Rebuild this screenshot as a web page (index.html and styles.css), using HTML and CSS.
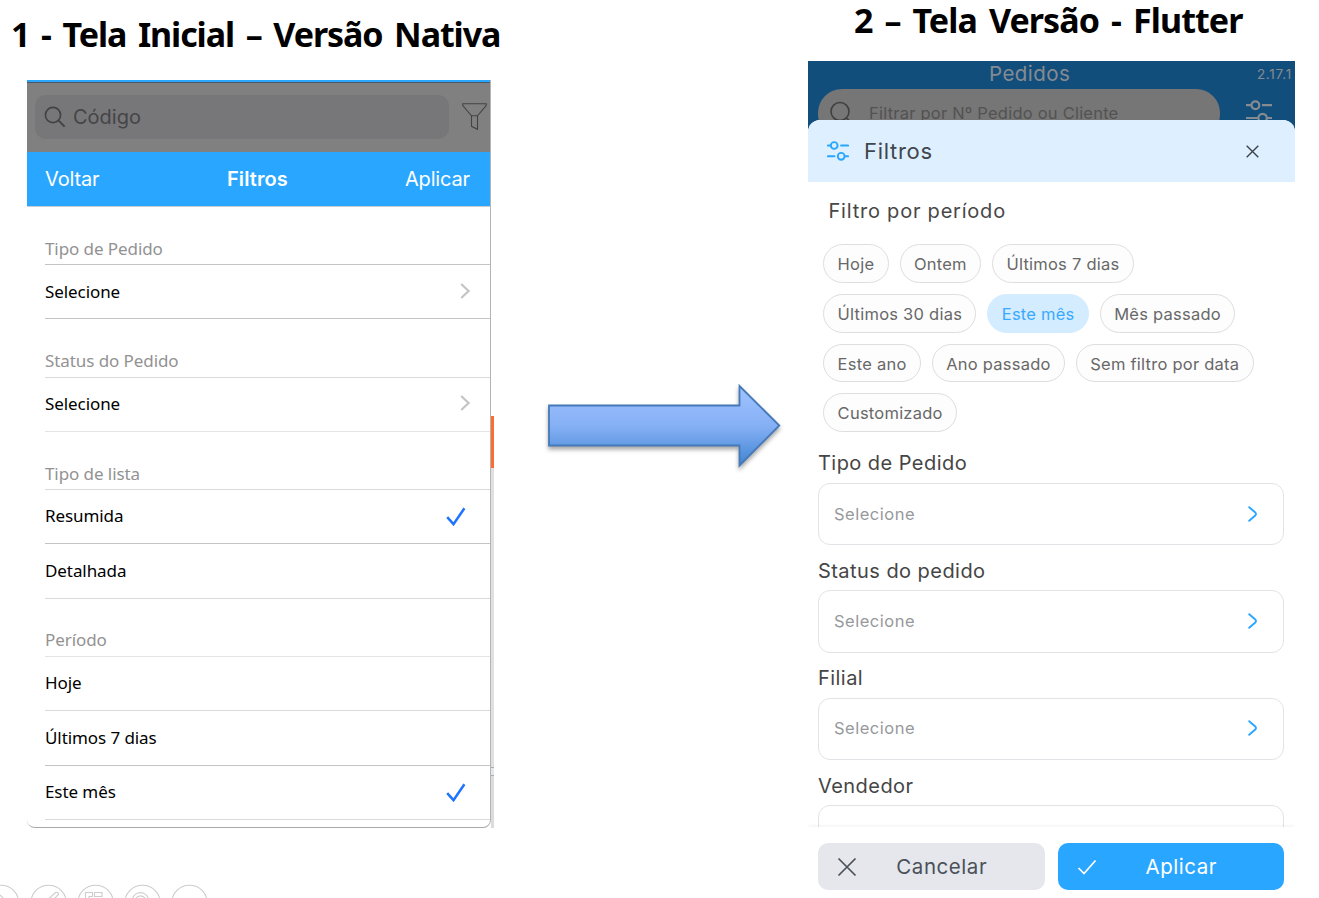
FILE: index.html
```html
<!DOCTYPE html>
<html lang="pt-BR">
<head>
    <meta charset="UTF-8">
    <meta name="viewport" content="width=device-width, initial-scale=1.0">
    <title>Filtros - Nativa x Flutter</title>
    <link rel="stylesheet" href="styles.css">
</head>
<body>
    <div class="slide">
        <!-- Versão nativa -->
        <section class="native">
            <h1 class="title title-native">1 - Tela Inicial – Versão Nativa</h1>
            <div class="native-shot">
                <div class="native-screen">
                    <div class="native-search">
                        <div class="search-box">
                            <svg width="22" height="22" viewBox="0 0 22 22" fill="none" stroke="#434345" stroke-width="1.7">
                                <circle cx="9" cy="9" r="7.6"/>
                                <path d="M14.4 14.4L20.6 20.6" stroke-width="2"/>
                            </svg>
                            <span>Código</span>
                        </div>
                        <svg class="funnel" width="25" height="28" viewBox="0 0 25 28" fill="none" stroke="#434343" stroke-width="1.1">
                            <path d="M.8 .8H24.2V2.5L15.5 12.8H9.5L.8 2.5ZM9.5 12.8V23.3L15.5 26.3V12.8"/>
                        </svg>
                    </div>
                    <div class="native-nav">
                        <span>Voltar</span>
                        <strong>Filtros</strong>
                        <span class="aplicar">Aplicar</span>
                    </div>
                    <div class="native-list">
                        <div class="group">Tipo de Pedido</div>
                        <div class="row">
                            <span>Selecione</span>
                            <svg class="chevron" width="11" height="16" viewBox="0 0 11 16"><path d="M1.2 1L8.6 8L1.2 15"/></svg>
                        </div>
                        <div class="group light">Status do Pedido</div>
                        <div class="row lighter">
                            <span>Selecione</span>
                            <svg class="chevron" width="11" height="16" viewBox="0 0 11 16"><path d="M1.2 1L8.6 8L1.2 15"/></svg>
                        </div>
                        <div class="group light">Tipo de lista</div>
                        <div class="row">
                            <span>Resumida</span>
                            <svg class="check" width="20" height="20" viewBox="0 0 20 20"><path d="M1.2 11.2L7.5 18.2L18.4 2.2"/></svg>
                        </div>
                        <div class="row light">Detalhada</div>
                        <div class="group lighter">Período</div>
                        <div class="row light">Hoje</div>
                        <div class="row tall">Últimos 7 dias</div>
                        <div class="row light">
                            <span>Este mês</span>
                            <svg class="check" width="20" height="20" viewBox="0 0 20 20"><path d="M1.2 11.2L7.5 18.2L18.4 2.2"/></svg>
                        </div>
                    </div>
                </div>
                <div class="edge">
                    <div class="edge-orange"></div>
                    <div class="edge-gray"></div>
                    <div class="edge-mark"></div>
                </div>
            </div>
            <svg class="slide-tools" width="220" height="14" viewBox="0 884 220 14" fill="none" stroke="#cdcdcd" stroke-width="1.1">
                <circle cx="1" cy="903" r="17.8"/>
                <circle cx="48.6" cy="903" r="17.8"/>
                <circle cx="95.6" cy="903" r="17.8"/>
                <circle cx="142.5" cy="903" r="17.8"/>
                <circle cx="189.5" cy="903" r="17.8"/>
                <path d="M0 895L4 899M48.5 899L55.5 892.6Q58.5 891.5 58.5 894.5L54 899"/>
                <path d="M85.5 899V892.5H92.5V896.5H89V899M94.5 892.5H102V896.5H94.5Z"/>
                <path d="M132.5 899A8.2 8.2 0 0 1 148.5 899M135.5 899A5.6 5.6 0 0 1 145.5 899"/>
            </svg>
        </section>

        <svg class="arrow" width="246" height="96" viewBox="0 0 246 96">
            <defs>
                <linearGradient id="arrowFill" x1="0" y1="0" x2="0" y2="1">
                    <stop offset="0" stop-color="#9fc3ff"/>
                    <stop offset="0.5" stop-color="#86b0f5"/>
                    <stop offset="1" stop-color="#4085d2"/>
                </linearGradient>
            </defs>
            <path d="M7 26.5H197.5V7L237.3 46.5L197.5 86.5V66.5H7Z" fill="url(#arrowFill)" stroke="#4579b8" stroke-width="1.8"/>
        </svg>

        <!-- Versão Flutter -->
        <section class="flutter">
            <h1 class="title title-flutter">2 – Tela Versão - Flutter</h1>
            <div class="flutter-screen">
                <div class="app-bar">
                    <div class="app-top">
                        <span class="app-name">Pedidos</span>
                        <span class="app-version">2.17.1</span>
                    </div>
                    <div class="app-search">
                        <div class="app-pill">
                            <svg width="24" height="24" viewBox="0 0 24 24" fill="none" stroke="#404040" stroke-width="1.6">
                                <circle cx="10" cy="10.5" r="9"/>
                                <path d="M16.5 17L21.5 22"/>
                            </svg>
                            <span>Filtrar por Nº Pedido ou Cliente</span>
                        </div>
                        <svg class="sliders" width="26" height="26" viewBox="0 0 26 26" fill="none" stroke="#858b91" stroke-width="2.2">
                            <path d="M0 6.2H5.5M16 6.2H26M0 19H12M21 19H26"/>
                            <circle cx="9.4" cy="6.2" r="3.9"/>
                            <circle cx="16.6" cy="19" r="4.2"/>
                        </svg>
                    </div>
                </div>
                <div class="sheet">
                    <div class="sheet-header">
                        <svg width="22" height="20" viewBox="0 0 22 20" fill="none" stroke="#29a6ff" stroke-width="1.9" stroke-linecap="round">
                            <path d="M.9 4.5H3.5M14 4.5H21.1M.9 15.3H7.5M18 15.3H21.1"/>
                            <circle cx="7.2" cy="4.5" r="3.4"/>
                            <circle cx="14.2" cy="15.3" r="3.4"/>
                        </svg>
                        <h2>Filtros</h2>
                        <svg class="close" width="13" height="13" viewBox="0 0 13 13" fill="none" stroke="#3c4249" stroke-width="1.4">
                            <path d="M.7.7L12.3 12.3M12.3.7L.7 12.3"/>
                        </svg>
                    </div>
                    <div class="sheet-body">
                        <h3 class="period-title">Filtro por período</h3>
                        <div class="chips">
                            <span class="chip">Hoje</span>
                            <span class="chip">Ontem</span>
                            <span class="chip">Últimos 7 dias</span>
                            <span class="chip">Últimos 30 dias</span>
                            <span class="chip active">Este mês</span>
                            <span class="chip">Mês passado</span>
                            <span class="chip">Este ano</span>
                            <span class="chip">Ano passado</span>
                            <span class="chip">Sem filtro por data</span>
                            <span class="chip">Customizado</span>
                        </div>
                        <div class="field">
                            <label>Tipo de Pedido</label>
                            <div class="select">
                                <span>Selecione</span>
                                <svg width="10" height="16" viewBox="0 0 10 16"><path d="M1.2 1.2L7 6.2Q9 8 7 9.8L1.2 14.8"/></svg>
                            </div>
                        </div>
                        <div class="field">
                            <label>Status do pedido</label>
                            <div class="select">
                                <span>Selecione</span>
                                <svg width="10" height="16" viewBox="0 0 10 16"><path d="M1.2 1.2L7 6.2Q9 8 7 9.8L1.2 14.8"/></svg>
                            </div>
                        </div>
                        <div class="field">
                            <label>Filial</label>
                            <div class="select">
                                <span>Selecione</span>
                                <svg width="10" height="16" viewBox="0 0 10 16"><path d="M1.2 1.2L7 6.2Q9 8 7 9.8L1.2 14.8"/></svg>
                            </div>
                        </div>
                        <div class="field">
                            <label>Vendedor</label>
                            <div class="select"></div>
                        </div>
                    </div>
                    <div class="sheet-footer">
                        <div class="btn btn-cancel">
                            <svg width="20" height="20" viewBox="0 0 20 20"><path d="M1.5 1.5L18.5 18.5M18.5 1.5L1.5 18.5"/></svg>
                            <span>Cancelar</span>
                        </div>
                        <div class="btn btn-apply">
                            <svg width="20" height="20" viewBox="0 0 20 20"><path d="M1.5 11L7 16.5L18.5 3.5"/></svg>
                            <span>Aplicar</span>
                        </div>
                    </div>
                </div>
            </div>
        </section>
    </div>
</body>
</html>
```
FILE: styles.css
```css
* {
    box-sizing: border-box;
}

body {
    margin: 0;
    background-color: #fff;
    font-family: Inter, "Liberation Sans", sans-serif;
    overflow: hidden;
}

svg {
    display: block;
    flex: none;
}

h1, h2, h3 {
    margin: 0;
    font-weight: 400;
}

.slide {
    display: flex;
    width: 1319px;
    height: 898px;
    overflow: hidden;
}

.title {
    font-family: "Noto Sans", "Open Sans", sans-serif;
    font-weight: 700;
    font-size: 34px;
    line-height: 40px;
    letter-spacing: -1.1px;
    word-spacing: 4px;
    color: #000;
    white-space: nowrap;
}

/* ---- tela nativa ---- */
.native {
    width: 542px;
    display: flex;
    flex-direction: column;
}

.title-native {
    height: 80px;
    padding: 14px 0 0 11px;
}

.native-shot {
    display: flex;
    height: 748px;
    margin-left: 27px;
}

.native-screen {
    width: 464px;
    overflow: hidden;
    border-right: 1px solid #b4b4b4;
    border-bottom: 1px solid #a9a9a9;
    border-radius: 0 0 8px 8px;
    background-color: #fff;
}

.native-search {
    display: flex;
    align-items: center;
    height: 72px;
    padding-left: 8px;
    border-top: 2px solid #29a6ff;
    background-color: #808080;
    box-shadow: inset 0 1px #4c5964;
}

.search-box {
    display: flex;
    align-items: center;
    gap: 7px;
    width: 414px;
    height: 44px;
    padding-left: 9px;
    border-radius: 11px;
    background-color: #777779;
    color: #454547;
    font-size: 20px;
}

.funnel {
    margin-left: 13px;
}

.native-nav {
    display: grid;
    grid-template-columns: 1fr auto 1fr;
    align-items: center;
    height: 55px;
    padding: 0 20px 0 18px;
    border-bottom: 1px solid #c8cdd2;
    background-color: #29a6ff;
    color: #fff;
    font-size: 20px;
    letter-spacing: -0.15px;
}

.native-nav strong {
    font-weight: 600;
    letter-spacing: 0.1px;
}

.native-nav .aplicar {
    text-align: right;
}

.native-list {
    padding-left: 18px;
    font-family: "Noto Sans", "Open Sans", sans-serif;
    font-size: 17px;
    letter-spacing: -0.08px;
}

.group,
.row {
    display: flex;
    border-bottom: 1px solid #c4c4c4;
}

.group {
    align-items: flex-end;
    height: 58.25px;
    padding-bottom: 4.6px;
    color: #929292;
}

.row {
    align-items: center;
    justify-content: space-between;
    height: 54.2px;
    padding-bottom: 1.6px;
    color: #000;
}

.row.tall {
    height: 55px;
}

.light {
    border-color: #dadada;
}

.lighter {
    border-color: #e4e4e4;
}

.chevron {
    margin-right: 19px;
    fill: none;
    stroke: #c4c4c4;
    stroke-width: 2.2;
}

.check {
    margin-right: 24px;
    fill: none;
    stroke: #1f74ff;
    stroke-width: 2.5;
}

.edge {
    display: flex;
    flex-direction: column;
    width: 3px;
    padding-top: 336px;
}

.edge-orange {
    height: 52px;
    background-color: #ff6c2f;
}

.edge-gray {
    height: 299px;
    background-color: #e0e0e0;
}

.edge-mark {
    height: 61px;
    background: linear-gradient(#a9adb0 1px, #e3e7ea 1px 8px, #a9adb0 8px 9px, #dcdcdc 9px);
}

.slide-tools {
    margin-top: auto;
}

/* ---- seta ---- */
.arrow {
    margin-top: 379px;
    margin-right: 20px;
    filter: drop-shadow(0 3px 2px rgba(0, 0, 0, 0.35));
}

/* ---- tela flutter ---- */
.flutter {
    display: flex;
    flex-direction: column;
    width: 487px;
}

.title-flutter {
    height: 61px;
    padding-left: 46px;
    letter-spacing: -0.9px;
}

.flutter-screen {
    display: flex;
    flex-direction: column;
    height: 837px;
    background-color: #124e7c;
}

.app-bar {
    flex: none;
    height: 58.5px;
    overflow: hidden;
}

.app-top {
    display: grid;
    grid-template-columns: auto 1fr;
    align-items: center;
    height: 25px;
    padding: 0 3px 0 181px;
    color: #858b91;
}

.app-name {
    font-size: 20.5px;
    letter-spacing: 0.45px;
}

.app-version {
    font-size: 13.5px;
    letter-spacing: 0.75px;
    text-align: right;
}

.app-search {
    display: flex;
    height: 49px;
    margin-top: 2.5px;
    padding-left: 10px;
}

.app-pill {
    display: flex;
    align-items: center;
    gap: 15px;
    width: 402px;
    padding-left: 12px;
    border-radius: 24px;
    background-color: #767676;
    color: #525252;
    font-size: 16.5px;
    letter-spacing: 0.22px;
}

.sliders {
    margin: 10px 0 0 26px;
}

.sheet {
    display: flex;
    flex: 1;
    flex-direction: column;
    min-height: 0;
    overflow: hidden;
    border-radius: 12px 12px 0 0;
    background-color: #fff;
}

.sheet-header {
    display: flex;
    flex: none;
    align-items: center;
    height: 62.5px;
    padding: 1px 36px 0 18.5px;
    background-color: #def0ff;
    color: #41464d;
}

.sheet-header h2 {
    margin-left: 15.5px;
    font-size: 22px;
    letter-spacing: 0.7px;
}

.close {
    margin-left: auto;
}

.sheet-body {
    flex: 1;
    min-height: 0;
    overflow: hidden;
    padding: 0 11px 0 10px;
}

.period-title {
    height: 62.2px;
    padding: 17px 0 0 10.5px;
    color: #474747;
    font-size: 20px;
    line-height: 24px;
    letter-spacing: 0.78px;
}

.chips {
    display: flex;
    flex-wrap: wrap;
    gap: 11px;
    padding-left: 5.3px;
}

.chip {
    height: 38.7px;
    padding: 0 13.3px;
    border: 1px solid #dedede;
    border-radius: 20px;
    background-color: #fdfdfd;
    color: #686868;
    font-size: 16.5px;
    line-height: 38px;
    letter-spacing: 0.24px;
    white-space: nowrap;
}

.chip.active {
    border-color: #d4ecff;
    background-color: #d4ecff;
    color: #39a9ff;
}

.field {
    height: 107.4px;
}

.field label {
    display: block;
    height: 51px;
    padding-top: 19.4px;
    color: #454545;
    font-size: 20px;
    line-height: 24px;
    letter-spacing: 0.45px;
}

.select {
    display: flex;
    align-items: center;
    justify-content: space-between;
    height: 62.3px;
    padding: 0 25px 1px 15px;
    border: 1px solid #e3e3e7;
    border-radius: 12px;
    color: #97999c;
    font-size: 16.5px;
    letter-spacing: 0.5px;
}

.select svg {
    fill: none;
    stroke: #29a6ff;
    stroke-width: 1.9;
    stroke-linecap: round;
}

.sheet-footer {
    display: flex;
    flex: none;
    gap: 13px;
    height: 71px;
    padding: 16px 11px 8px 10px;
    background-color: #fff;
    box-shadow: 0 -1px 4px rgba(0, 0, 0, 0.06);
}

.btn {
    display: flex;
    flex: 1;
    align-items: center;
    padding: 0 18px 0 19px;
    border-radius: 10px;
    font-size: 20.5px;
    letter-spacing: 0.55px;
}

.btn svg {
    fill: none;
    stroke-width: 1.7;
}

.btn span {
    flex: 1;
    text-align: center;
}

.btn-cancel {
    background-color: #e5e7ec;
    color: #4a5059;
}

.btn-cancel svg {
    stroke: #4a5059;
}

.btn-apply {
    background-color: #29a6ff;
    color: #fff;
}

.btn-apply svg {
    stroke: #fff;
}
```
